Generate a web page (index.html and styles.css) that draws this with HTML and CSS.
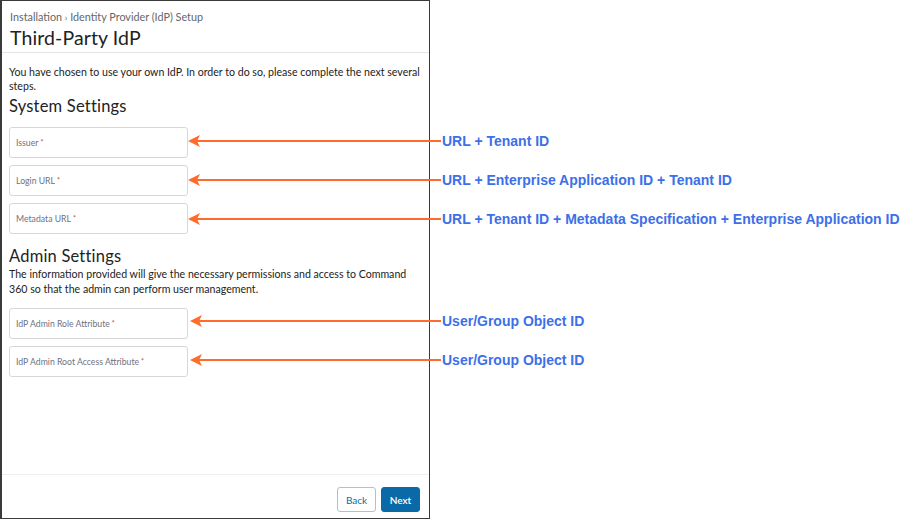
FILE: index.html
```html
<!DOCTYPE html>
<html>
<head>
<meta charset="utf-8">
<link rel="stylesheet" href="styles.css">
</head>
<body>
<div class="stage">
  <div class="panel">
    <header class="head">
      <div class="crumb">Installation <span class="sep">›</span> Identity Provider (IdP) Setup</div>
      <h1 class="title">Third-Party IdP</h1>
    </header>
    <main class="content">
      <p class="intro">You have chosen to use your own IdP. In order to do so, please complete the next several steps.</p>
      <h2 class="section">System Settings</h2>
      <div class="fields">
        <div class="field">Issuer<span class="req">*</span></div>
        <div class="field">Login URL<span class="req">*</span></div>
        <div class="field">Metadata URL<span class="req">*</span></div>
      </div>
      <h2 class="section admin">Admin Settings</h2>
      <p class="intro desc">The information provided will give the necessary permissions and access to Command 360 so that the admin can perform user management.</p>
      <div class="fields">
        <div class="field">IdP Admin Role Attribute<span class="req">*</span></div>
        <div class="field">IdP Admin Root Access Attribute<span class="req">*</span></div>
      </div>
    </main>
    <footer class="foot">
      <button class="btn back">Back</button>
      <button class="btn next">Next</button>
    </footer>
  </div>

  <svg class="arrows" width="900" height="520" viewBox="0 0 900 520">
    <g stroke="#ff6b2b" stroke-width="2.2" fill="#ff6b2b">
      <line x1="196" y1="141" x2="441" y2="141"/>
      <polygon points="188,141 200,135 197,141 200,147" stroke="none"/>
      <line x1="196" y1="180" x2="441" y2="180"/>
      <polygon points="188,180 200,174 197,180 200,186" stroke="none"/>
      <line x1="196" y1="219" x2="441" y2="219"/>
      <polygon points="188,219 200,213 197,219 200,225" stroke="none"/>
      <line x1="198" y1="321" x2="441" y2="321"/>
      <polygon points="190,321 202,315 199,321 202,327" stroke="none"/>
      <line x1="198" y1="360" x2="441" y2="360"/>
      <polygon points="190,360 202,354 199,360 202,366" stroke="none"/>
    </g>
  </svg>

  <div class="note n1">URL + Tenant ID</div>
  <div class="note n2">URL + Enterprise Application ID + Tenant ID</div>
  <div class="note n3">URL + Tenant ID + Metadata Specification + Enterprise Application ID</div>
  <div class="note n4">User/Group Object ID</div>
  <div class="note n5">User/Group Object ID</div>
</div>
</body>
</html>
```

FILE: styles.css
```css
* { box-sizing: border-box; }
html, body { margin: 0; padding: 0; background: #fff; }
body { font-family: "Lato", "Open Sans", sans-serif; color: #333; }

.stage { position: relative; width: 900px; height: 520px; }

.panel {
  width: 430px;
  height: 519px;
  border: 1px solid #3a3a3a;
  border-left-width: 2px;
  display: flex;
  flex-direction: column;
  background: #fff;
}

.head {
  padding: 9px 8px 0 8px;
  height: 52px;
  border-bottom: 1px solid #e4e4e4;
}
.crumb { font-size: 10.8px; color: #666; line-height: 14px; }
.crumb .sep { font-size: 9px; }
.title { margin: 1px 0 0; font-size: 19.5px; font-weight: 400; color: #222; line-height: 24px; letter-spacing: 0.1px; }

.content { flex: 1; padding: 13px 8px 0 7px; }
.intro { margin: 0; font-size: 10.6px; line-height: 13.5px; color: #222; width: 412px; }
.section { margin: 2px 0 0; font-size: 16.5px; font-weight: 400; color: #222; line-height: 22px; letter-spacing: 0.2px; }
.section.admin { margin-top: 11px; }
.desc { margin-top: 0; width: 405px; line-height: 15px; }

.fields { display: flex; flex-direction: column; gap: 7px; margin-top: 10px; }
.desc + .fields { margin-top: 11px; }
.field {
  width: 179px;
  height: 31px;
  border: 1px solid #d8d8d8;
  border-radius: 3px;
  padding: 0 6px;
  display: flex;
  align-items: center;
  font-size: 8.7px;
  color: #6f7280;
}
.req { font-size: 7px; align-self: flex-start; margin-top: 10px; margin-left: 2px; color: #b94a2a; }

.foot {
  height: 44px;
  border-top: 1px solid #eeeeee;
  display: flex;
  justify-content: flex-end;
  align-items: flex-start;
  gap: 5px;
  padding: 12px 9px 0 0;
}
.btn {
  height: 25px;
  width: 39px;
  font-family: "Lato", "Open Sans", sans-serif;
  font-size: 10px;
  border-radius: 3px;
  padding: 0;
}
.back { background: #fff; border: 1px solid #9ec6dc; color: #0072a3; }
.next { background: #0a6aa8; border: 1px solid #0a6aa8; color: #fff; font-weight: 600; }

.arrows { position: absolute; left: 0; top: 0; pointer-events: none; }

.note {
  position: absolute;
  left: 442px;
  font-family: "Liberation Sans", Arial, sans-serif;
  font-weight: 700;
  font-size: 14px;
  color: #3d6fe8;
  line-height: 16px;
  white-space: nowrap;
}
.n1 { top: 133px; }
.n2 { top: 172px; }
.n3 { top: 211px; }
.n4 { top: 313px; }
.n5 { top: 352px; }
```
